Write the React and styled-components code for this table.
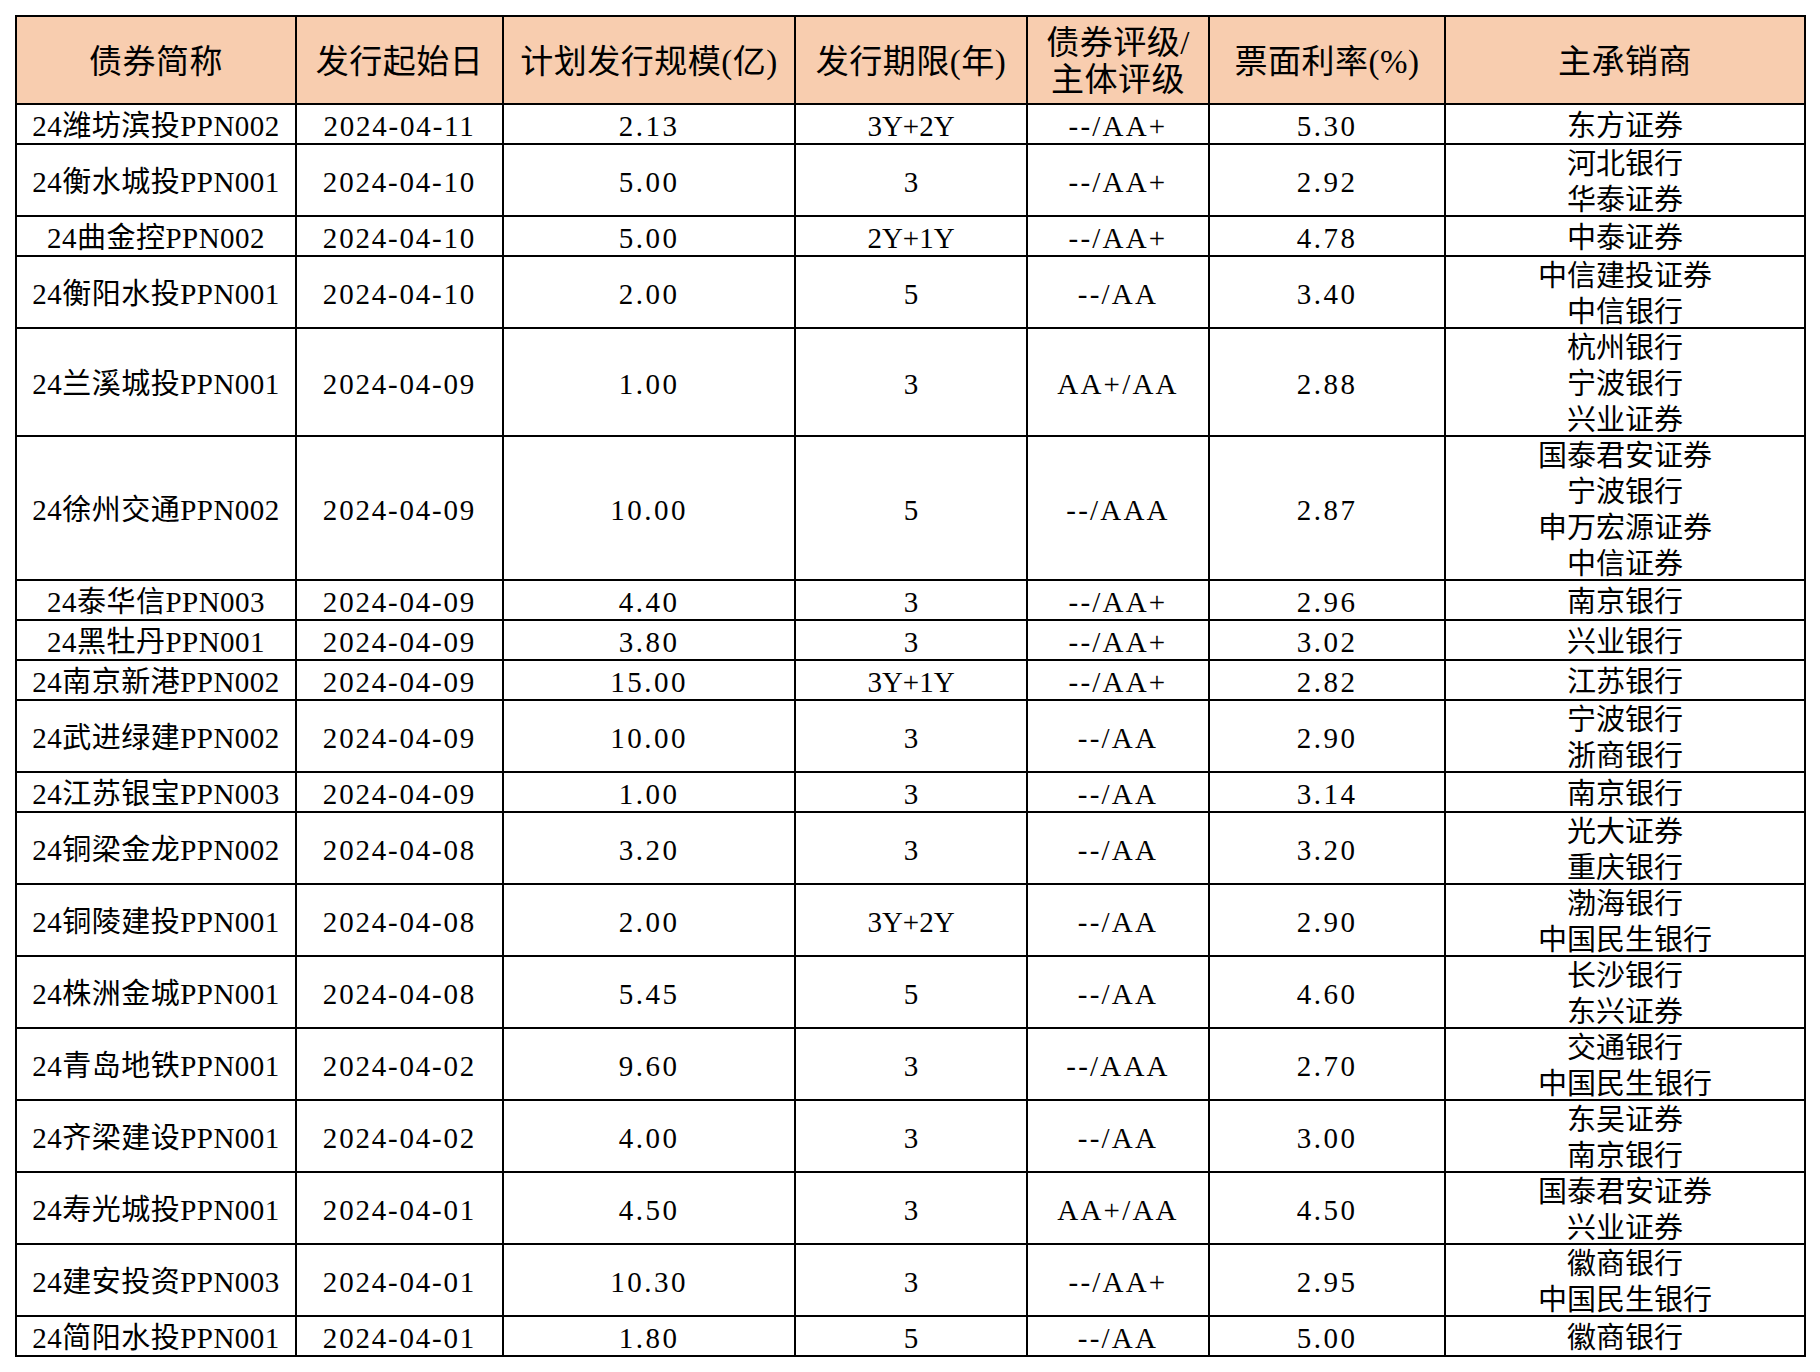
import React from "react";
import styled, { createGlobalStyle } from "styled-components";

const Global = createGlobalStyle`
  html, body { margin: 0; padding: 0; background: #ffffff; }
  body { font-family: "Liberation Serif", "Noto Sans CJK SC", serif; color: #000; }
`;

const Page = styled.div`
  padding: 15px 0 0 15px;
  width: 1820px;
  height: 1372px;
  box-sizing: border-box;
  background: #fff;
`;

const Grid = styled.div`
  display: inline-grid;
  grid-template-columns: 278px 205px 290px 230px 180px 234px 358px;
  gap: 2px;
  padding: 2px;
  background: #000;
`;

const Row = styled.div`
  display: contents;
`;

const HeadCell = styled.div`
  height: 86px;
  box-sizing: border-box;
  padding-top: 4px;
  background: #f8cdaf;
  display: flex;
  align-items: center;
  justify-content: center;
  text-align: center;
  font-family: "Liberation Serif", "Noto Sans CJK SC", serif;
  font-size: 33px;
  line-height: 37px;
  letter-spacing: 0.5px;
  white-space: pre-line;
`;

const Cell = styled.div`
  height: ${(p) => (p.$lines === 1 ? 38 : p.$lines * 36 - 2)}px;
  box-sizing: border-box;
  padding-top: 4px;
  background: #fff;
  display: flex;
  flex-direction: column;
  align-items: center;
  justify-content: center;
  text-align: center;
  font-size: 29px;
  line-height: 36px;
  letter-spacing: ${(p) => p.$spacing || 0}px;
  white-space: nowrap;
  overflow: hidden;
`;

const Line = styled.span`
  display: block;
`;

const headers = [
  "债券简称",
  "发行起始日",
  "计划发行规模(亿)",
  "发行期限(年)",
  "债券评级/\n主体评级",
  "票面利率(%)",
  "主承销商",
];

const spacing = [0.5, 1.8, 2.5, 0, 2.2, 2.5];

const rows = [
  ["24潍坊滨投PPN002", "2024-04-11", "2.13", "3Y+2Y", "--/AA+", "5.30", ["东方证券"]],
  ["24衡水城投PPN001", "2024-04-10", "5.00", "3", "--/AA+", "2.92", ["河北银行", "华泰证券"]],
  ["24曲金控PPN002", "2024-04-10", "5.00", "2Y+1Y", "--/AA+", "4.78", ["中泰证券"]],
  ["24衡阳水投PPN001", "2024-04-10", "2.00", "5", "--/AA", "3.40", ["中信建投证券", "中信银行"]],
  ["24兰溪城投PPN001", "2024-04-09", "1.00", "3", "AA+/AA", "2.88", ["杭州银行", "宁波银行", "兴业证券"]],
  ["24徐州交通PPN002", "2024-04-09", "10.00", "5", "--/AAA", "2.87", ["国泰君安证券", "宁波银行", "申万宏源证券", "中信证券"]],
  ["24泰华信PPN003", "2024-04-09", "4.40", "3", "--/AA+", "2.96", ["南京银行"]],
  ["24黑牡丹PPN001", "2024-04-09", "3.80", "3", "--/AA+", "3.02", ["兴业银行"]],
  ["24南京新港PPN002", "2024-04-09", "15.00", "3Y+1Y", "--/AA+", "2.82", ["江苏银行"]],
  ["24武进绿建PPN002", "2024-04-09", "10.00", "3", "--/AA", "2.90", ["宁波银行", "浙商银行"]],
  ["24江苏银宝PPN003", "2024-04-09", "1.00", "3", "--/AA", "3.14", ["南京银行"]],
  ["24铜梁金龙PPN002", "2024-04-08", "3.20", "3", "--/AA", "3.20", ["光大证券", "重庆银行"]],
  ["24铜陵建投PPN001", "2024-04-08", "2.00", "3Y+2Y", "--/AA", "2.90", ["渤海银行", "中国民生银行"]],
  ["24株洲金城PPN001", "2024-04-08", "5.45", "5", "--/AA", "4.60", ["长沙银行", "东兴证券"]],
  ["24青岛地铁PPN001", "2024-04-02", "9.60", "3", "--/AAA", "2.70", ["交通银行", "中国民生银行"]],
  ["24齐梁建设PPN001", "2024-04-02", "4.00", "3", "--/AA", "3.00", ["东吴证券", "南京银行"]],
  ["24寿光城投PPN001", "2024-04-01", "4.50", "3", "AA+/AA", "4.50", ["国泰君安证券", "兴业证券"]],
  ["24建安投资PPN003", "2024-04-01", "10.30", "3", "--/AA+", "2.95", ["徽商银行", "中国民生银行"]],
  ["24简阳水投PPN001", "2024-04-01", "1.80", "5", "--/AA", "5.00", ["徽商银行"]],
];

export default function App() {
  return (
    <Page>
      <Global />
      <Grid>
        <Row>
          {headers.map((h) => (
            <HeadCell key={h}>{h}</HeadCell>
          ))}
        </Row>
        {rows.map((r, i) => {
          const lines = r[6].length;
          return (
            <Row key={i}>
              {r.slice(0, 6).map((v, j) => (
                <Cell key={j} $lines={lines} $spacing={spacing[j]}>
                  {v}
                </Cell>
              ))}
              <Cell $lines={lines}>
                {r[6].map((u) => (
                  <Line key={u}>{u}</Line>
                ))}
              </Cell>
            </Row>
          );
        })}
      </Grid>
    </Page>
  );
}
